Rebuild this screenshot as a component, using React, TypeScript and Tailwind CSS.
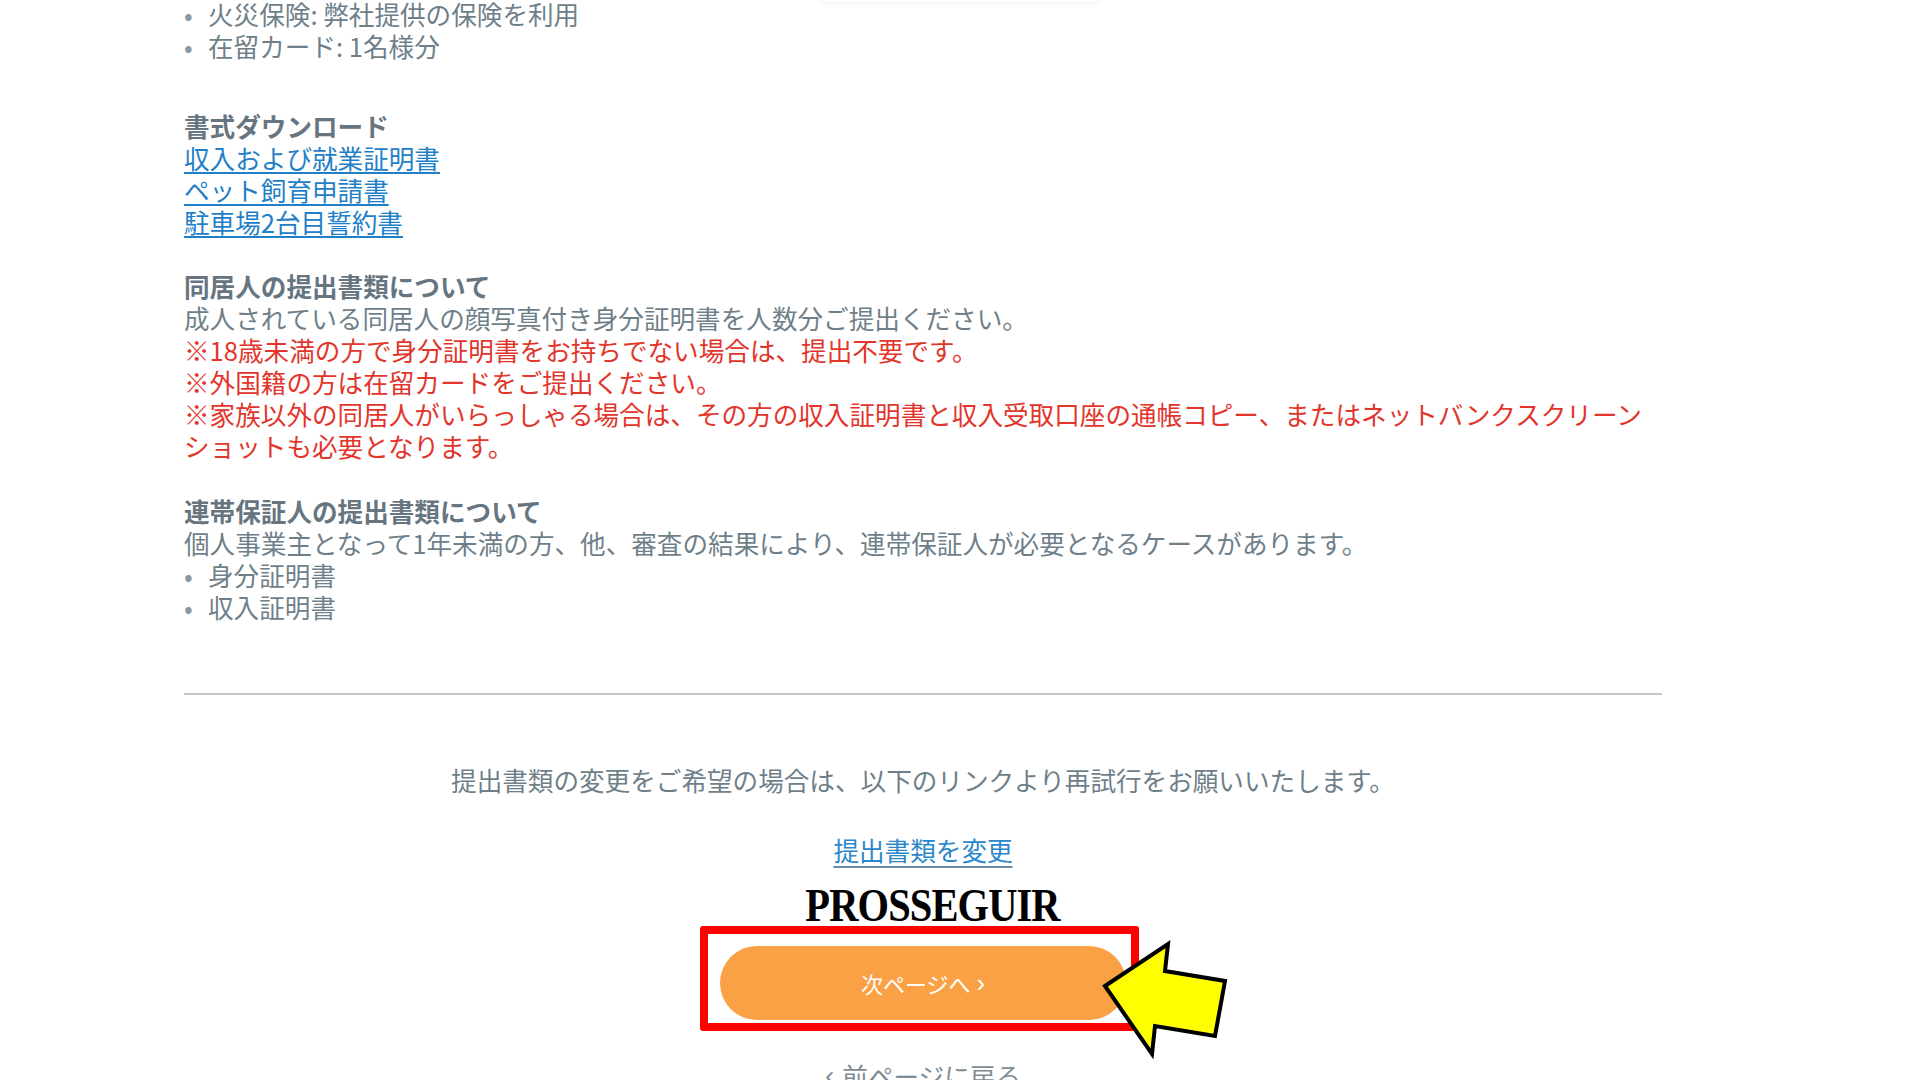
import React from "react";

const Bullet = ({ children }: { children: React.ReactNode }) => (
  <li className="flex">
    <span className="w-[24px] shrink-0 text-[#8a97a0]">•</span>
    <span>{children}</span>
  </li>
);

const DocLink = ({ children }: { children: React.ReactNode }) => (
  <a href="#" className="block w-fit text-[#1f80c8] underline decoration-[2px] underline-offset-[3px]">
    {children}
  </a>
);

export default function App() {
  return (
    <div
      className="relative h-screen overflow-hidden bg-white"
      style={{ fontFamily: '"Noto Sans CJK JP", "Noto Sans", sans-serif' }}
    >
      {/* bottom shadow of the card above the scroll position */}
      <div className="absolute left-[820px] top-[-20px] h-[22px] w-[280px] rounded-b-md bg-white shadow-[0_2px_6px_rgba(0,0,0,0.06)]" />

      <main className="ml-[184px] mt-[-2px] w-[1478px] text-[25.6px] leading-[32px] text-[#6f7f8a]">
        <ul>
          <Bullet>火災保険: 弊社提供の保険を利用</Bullet>
          <Bullet>在留カード: 1名様分</Bullet>
        </ul>

        <section className="mt-[48px]">
          <h3 className="font-bold text-[#66757f]">書式ダウンロード</h3>
          <DocLink>収入および就業証明書</DocLink>
          <DocLink>ペット飼育申請書</DocLink>
          <DocLink>駐車場2台目誓約書</DocLink>
        </section>

        <section className="mt-[32px]">
          <h3 className="font-bold text-[#66757f]">同居人の提出書類について</h3>
          <p>成人されている同居人の顔写真付き身分証明書を人数分ご提出ください。</p>
          <div className="text-[#e2352b]">
            <p>※18歳未満の方で身分証明書をお持ちでない場合は、提出不要です。</p>
            <p>※外国籍の方は在留カードをご提出ください。</p>
            <p>
              ※家族以外の同居人がいらっしゃる場合は、その方の収入証明書と収入受取口座の通帳コピー、またはネットバンクスクリーンショットも必要となります。
            </p>
          </div>
        </section>

        <section className="mt-[33px]">
          <h3 className="font-bold text-[#66757f]">連帯保証人の提出書類について</h3>
          <p>個人事業主となって1年未満の方、他、審査の結果により、連帯保証人が必要となるケースがあります。</p>
          <ul>
            <Bullet>身分証明書</Bullet>
            <Bullet>収入証明書</Bullet>
          </ul>
        </section>

        <hr className="mt-[70px] border-0 border-t-2 border-[#c3c8cc]" />

        <p className="mt-[69px] text-center">
          提出書類の変更をご希望の場合は、以下のリンクより再試行をお願いいたします。
        </p>

        <div className="mt-[38px] flex justify-center">
          <a
            href="#"
            className="text-[#2b87cc] underline decoration-[#6d8ba3] decoration-[2px] underline-offset-[5px]"
          >
            提出書類を変更
          </a>
        </div>

        <div className="mt-[17px] flex justify-center pl-[20px]">
          <span
            className="inline-block scale-x-[0.88] text-[46px] font-bold leading-[46px] tracking-[-1px] text-black"
            style={{ fontFamily: '"Liberation Serif", "Times New Roman", serif' }}
          >
            PROSSEGUIR
          </span>
        </div>

        <div className="mt-[17px] flex justify-center">
          <button className="flex h-[74px] w-[406px] items-center justify-center rounded-full bg-[#fba145] text-[22px] text-white">
            次ページへ
            <span className="ml-[6px] text-[26px] leading-none" style={{ fontFamily: '"Liberation Sans", sans-serif' }}>
              ›
            </span>
          </button>
        </div>

        <div className="mt-[40px] flex items-center justify-center text-[#7d8b95]">
          <span className="mr-[8px] text-[28px] leading-none" style={{ fontFamily: '"Liberation Sans", sans-serif' }}>
            ‹
          </span>
          <span>前ページに戻る</span>
        </div>
      </main>

      {/* annotation: red frame */}
      <div className="absolute left-[700px] top-[926px] h-[105px] w-[439px] rounded-[3px] border-[8px] border-[#ff0000]" />

      {/* annotation: yellow arrow */}
      <svg className="absolute left-0 top-0" width="1920" height="1080" viewBox="0 0 1920 1080">
        <polygon
          points="1105,986 1168,944 1165,971 1225,981 1215,1036 1155,1026 1152,1054"
          fill="#ffff00"
          stroke="#000"
          strokeWidth="4"
          strokeLinejoin="miter"
        />
      </svg>
    </div>
  );
}
